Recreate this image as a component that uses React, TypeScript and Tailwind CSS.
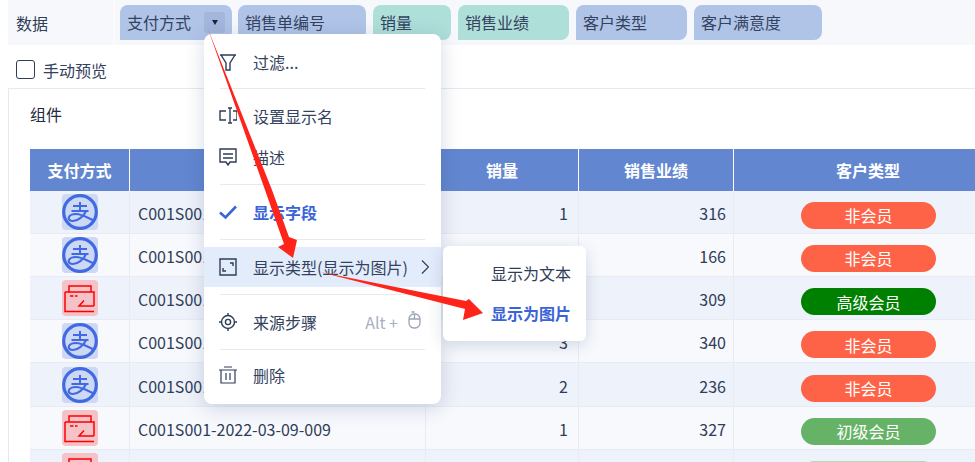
import React from 'react'

const chips = [
  { label: '支付方式', width: 'w-[112px]', color: 'bg-[#b0c4e8]', mr: 'mr-[6px]', menu: true },
  { label: '销售单编号', width: 'w-[128px]', color: 'bg-[#b0c4e8]', mr: 'mr-[7px]' },
  { label: '销量', width: 'w-[78px]', color: 'bg-[#aedfd9]', mr: 'mr-[7px]' },
  { label: '销售业绩', width: 'w-[111px]', color: 'bg-[#aedfd9]', mr: 'mr-[7px]' },
  { label: '客户类型', width: 'w-[111px]', color: 'bg-[#b0c4e8]', mr: 'mr-[7px]' },
  { label: '客户满意度', width: 'w-[128px]', color: 'bg-[#b0c4e8]', mr: '' },
]

const rows = [
  { pay: 'ali', id: 'C001S001-2022-03-09-004', qty: 1, sales: 316, type: '非会员', color: 'bg-[#ff6347]' },
  { pay: 'ali', id: 'C001S001-2022-03-09-005', qty: 1, sales: 166, type: '非会员', color: 'bg-[#ff6347]' },
  { pay: 'card', id: 'C001S001-2022-03-09-006', qty: 2, sales: 309, type: '高级会员', color: 'bg-[#008000]' },
  { pay: 'ali', id: 'C001S001-2022-03-09-007', qty: 3, sales: 340, type: '非会员', color: 'bg-[#ff6347]' },
  { pay: 'ali', id: 'C001S001-2022-03-09-008', qty: 2, sales: 236, type: '非会员', color: 'bg-[#ff6347]' },
  { pay: 'card', id: 'C001S001-2022-03-09-009', qty: 1, sales: 327, type: '初级会员', color: 'bg-[#66b266]' },
  { pay: 'card', id: 'C001S001-2022-03-09-010', qty: 1, sales: 298, type: '初级会员', color: 'bg-[#b6d3b6]' },
]

function AliIcon() {
  return (
    <div className="w-9 h-9 rounded-[4px] bg-[#cdd8f5]">
      <svg viewBox="0 0 36 36" className="w-9 h-9" fill="none" stroke="#4169e1">
        <circle cx="18" cy="18" r="16.3" strokeWidth="3.2" />
        <path d="M11 12H25M18 8V17M9.5 17H26.5" strokeWidth="2" />
        <path d="M24 17C22 22 16 27 11 27C7.5 27 6 25 7 23C8 21 11 20 14 20C20 20 26 24 33 27" strokeWidth="2.1" />
      </svg>
    </div>
  )
}

function CardIcon() {
  return (
    <div className="w-9 h-9 rounded-[4px] bg-[#f5c2c7]">
      <svg viewBox="0 0 36 36" className="w-9 h-9" fill="none" stroke="#ff0000" strokeWidth="1.5">
        <path d="M7 12V6h22v6M3 12h29v14M3 12v19.5h29" />
        <path d="M8 16h3.5M13 16h2.5M22 20.5l-5 5.5h15" />
      </svg>
    </div>
  )
}

function MenuRow({ icon, children, right, active, bold }: { icon: React.ReactNode; children: React.ReactNode; right?: React.ReactNode; active?: boolean; bold?: boolean }) {
  return (
    <div className={`h-10 flex items-center pl-[15px] pr-3 ${active ? 'bg-[#e3ecfb]' : ''}`}>
      <div className="w-[18px] h-[18px] shrink-0 mr-4">{icon}</div>
      <span className={bold ? 'font-bold text-[#3a64d8]' : ''}>{children}</span>
      {right}
    </div>
  )
}

function Divider({ className }: { className: string }) {
  return <div className={`mx-4 h-px bg-[#e6e9f2] ${className}`}></div>
}

const stroke = { fill: 'none', stroke: '#2f3d58', strokeWidth: 1.4 }

export default function App() {
  return (
    <div className="relative w-[975px] h-[462px] overflow-hidden bg-white text-[16px] leading-none text-[#34425e] font-['Noto_Sans_CJK_SC','Noto_Sans',sans-serif]">
      {/* data field bar */}
      <div className="ml-2 h-[45px] flex">
        <div className="w-[105px] bg-[#f7f8fc] flex items-center pl-2 text-[#2f3d58]">数据</div>
        <div className="w-[2px] bg-[#fbfbfe]"></div>
        <div className="flex-1 bg-[#f7f8fc] pl-[5px] pt-[5px] flex items-start">
          {chips.map((chip) => (
            <div key={chip.label} className={`${chip.width} ${chip.color} ${chip.mr} h-[35px] rounded-[8px] rounded-bl-none flex items-center pl-[7px] pb-[2px] shrink-0`}>
              <span>{chip.label}</span>
              {chip.menu && (
                <div className="ml-[13px] w-[21px] h-[21px] mt-[2px] rounded-[3px] bg-[#a3b6dc] flex items-center justify-center">
                  <div className="w-0 h-0 border-x-[3.5px] border-x-transparent border-t-[5px] border-t-[#1c2536]"></div>
                </div>
              )}
            </div>
          ))}
        </div>
      </div>

      {/* manual preview */}
      <div className="h-[43px] flex items-center pl-4 pt-[6px]">
        <div className="w-[19px] h-[19px] rounded-[3px] border border-[#2f3d58] bg-white mr-2"></div>
        <span>手动预览</span>
      </div>

      {/* widget panel */}
      <div className="ml-2 border-l border-t border-[#e6e9f2] pl-[21px]">
        <div className="h-[60px] pt-[17px] text-[#1f2a40]">组件</div>
        <div className="w-[973px]">
          <div className="flex h-[41.7px] bg-[#6287d0] text-white font-bold">
            {[
              ['支付方式', 'w-[100px]'],
              ['', 'w-[296px]'],
              ['销量', 'w-[153px]'],
              ['销售业绩', 'w-[155px]'],
              ['客户类型', 'w-[269px]'],
            ].map(([label, width], i) => (
              <div key={i} className={`${width} shrink-0 border-r border-white flex items-center justify-center`}>{label}</div>
            ))}
          </div>
          {rows.map((row, i) => (
            <div key={i} className={`flex h-[43.2px] border-b border-[#e8ebf4] text-[#2f3d58] ${i % 2 === 0 ? 'bg-[#eef2fa]' : 'bg-[#f7f9fd]'}`}>
              <div className="w-[100px] shrink-0 border-r border-[#e8ebf4] flex items-center justify-center">
                {row.pay === 'ali' ? <AliIcon /> : <CardIcon />}
              </div>
              <div className="w-[296px] shrink-0 border-r border-[#e8ebf4] flex items-center pl-2 pt-[2px]">{row.id}</div>
              <div className="w-[153px] shrink-0 border-r border-[#e8ebf4] flex items-center justify-end pr-[10px] pt-[2px]">{row.qty}</div>
              <div className="w-[155px] shrink-0 border-r border-[#e8ebf4] flex items-center justify-end pr-[7px] pt-[2px]">{row.sales}</div>
              <div className="w-[269px] shrink-0 flex items-center justify-center">
                <div className={`w-[135px] h-[27px] mt-[7px] rounded-full ${row.color} text-white flex items-center justify-center`}>{row.type}</div>
              </div>
            </div>
          ))}
        </div>
      </div>

      {/* context menu */}
      <div className="absolute left-[204px] top-[34px] w-[237px] h-[370px] bg-white rounded-[8px] shadow-[0_4px_20px_rgba(40,60,110,0.2)] pt-2">
        <MenuRow icon={<svg viewBox="0 0 18 18" className="w-[18px] h-[18px]" {...stroke}><path d="M1 2h16M2 2l5 8v7h4v-7l5-8" /></svg>}>
          过滤...
        </MenuRow>
        <Divider className="mt-[6px] mb-[7px]" />
        <MenuRow icon={<svg viewBox="0 0 18 18" className="w-[18px] h-[18px]" {...stroke}><path d="M7 4H1v9h6M14 4h4v9h-4M9 1h4M9 16h4M11 1v15" /></svg>}>
          设置显示名
        </MenuRow>
        <div className="mt-px">
          <MenuRow icon={<svg viewBox="0 0 18 18" className="w-[18px] h-[18px]" {...stroke}><path d="M1 1h16v13h-6l-2 3-2-3H1zM4 6h10M4 10h10" /></svg>}>
            描述
          </MenuRow>
        </div>
        <Divider className="my-[7px]" />
        <MenuRow bold icon={<svg viewBox="0 0 18 18" className="w-[18px] h-[18px]" fill="none" stroke="#3a64d8" strokeWidth="2.6"><path d="M1 9.5l5.5 5L17 3.5" /></svg>}>
          显示字段
        </MenuRow>
        <Divider className="my-[7px]" />
        <MenuRow
          active
          icon={<svg viewBox="0 0 18 18" className="w-[18px] h-[18px]" {...stroke}><path d="M1 1h16v16H1zM11 5h3v3M4 10v3h3" /></svg>}
          right={<svg viewBox="0 0 8 14" className="w-2 h-[14px] ml-[13px]" fill="none" stroke="#2f3d58" strokeWidth="1.2"><path d="M1 0.5L7.5 7 1 13.5" /></svg>}
        >
          显示类型(显示为图片)
        </MenuRow>
        <Divider className="my-[7px]" />
        <MenuRow
          icon={<svg viewBox="0 0 18 18" className="w-[18px] h-[18px]" {...stroke}><circle cx="9" cy="9" r="6.5" /><circle cx="9" cy="9" r="2.6" /><path d="M9 0v3M9 15v3M0 9h3M15 9h3" /></svg>}
          right={
            <span className="ml-auto mr-2 flex items-center text-[#a8afbd]">
              Alt +
              <svg viewBox="0 0 13 18" className="w-[13px] h-[18px] ml-[10px] -mt-1" fill="none" stroke="#9aa3b5" strokeWidth="1.3"><rect x="1" y="3" width="11" height="14" rx="5" /><path d="M1 8h11M6.5 3v5M3.5 1h3" /></svg>
            </span>
          }
        >
          来源步骤
        </MenuRow>
        <Divider className="mt-[7px] mb-[5px]" />
        <MenuRow icon={<svg viewBox="0 0 18 18" className="w-[18px] h-[18px]" fill="none" stroke="#2f3d58" strokeWidth="1.2"><path d="M0 4h18M5 1h8M2 4v13h14V4M7 7v7M11 7v7" /></svg>}>
          删除
        </MenuRow>
      </div>

      {/* submenu */}
      <div className="absolute left-[443px] top-[246px] w-[143px] h-[95px] bg-white rounded-[6px] shadow-[0_4px_16px_rgba(40,60,110,0.18)] flex flex-col items-end pr-[15px] pt-[19px] gap-6 text-[#2f3d58]">
        <span>显示为文本</span>
        <span className="font-bold text-[#3a64d8]">显示为图片</span>
      </div>

      {/* annotation arrows */}
      <svg viewBox="0 0 975 462" className="absolute inset-0 w-[975px] h-[462px] pointer-events-none" fill="#ff2419">
        <path d="M208 29L272 190 289 237 297 240 293 258 278 247 284 244 265 190z" />
        <path d="M320 272L466 301 469 299 483 313 463 320 465 309z" />
      </svg>
    </div>
  )
}
